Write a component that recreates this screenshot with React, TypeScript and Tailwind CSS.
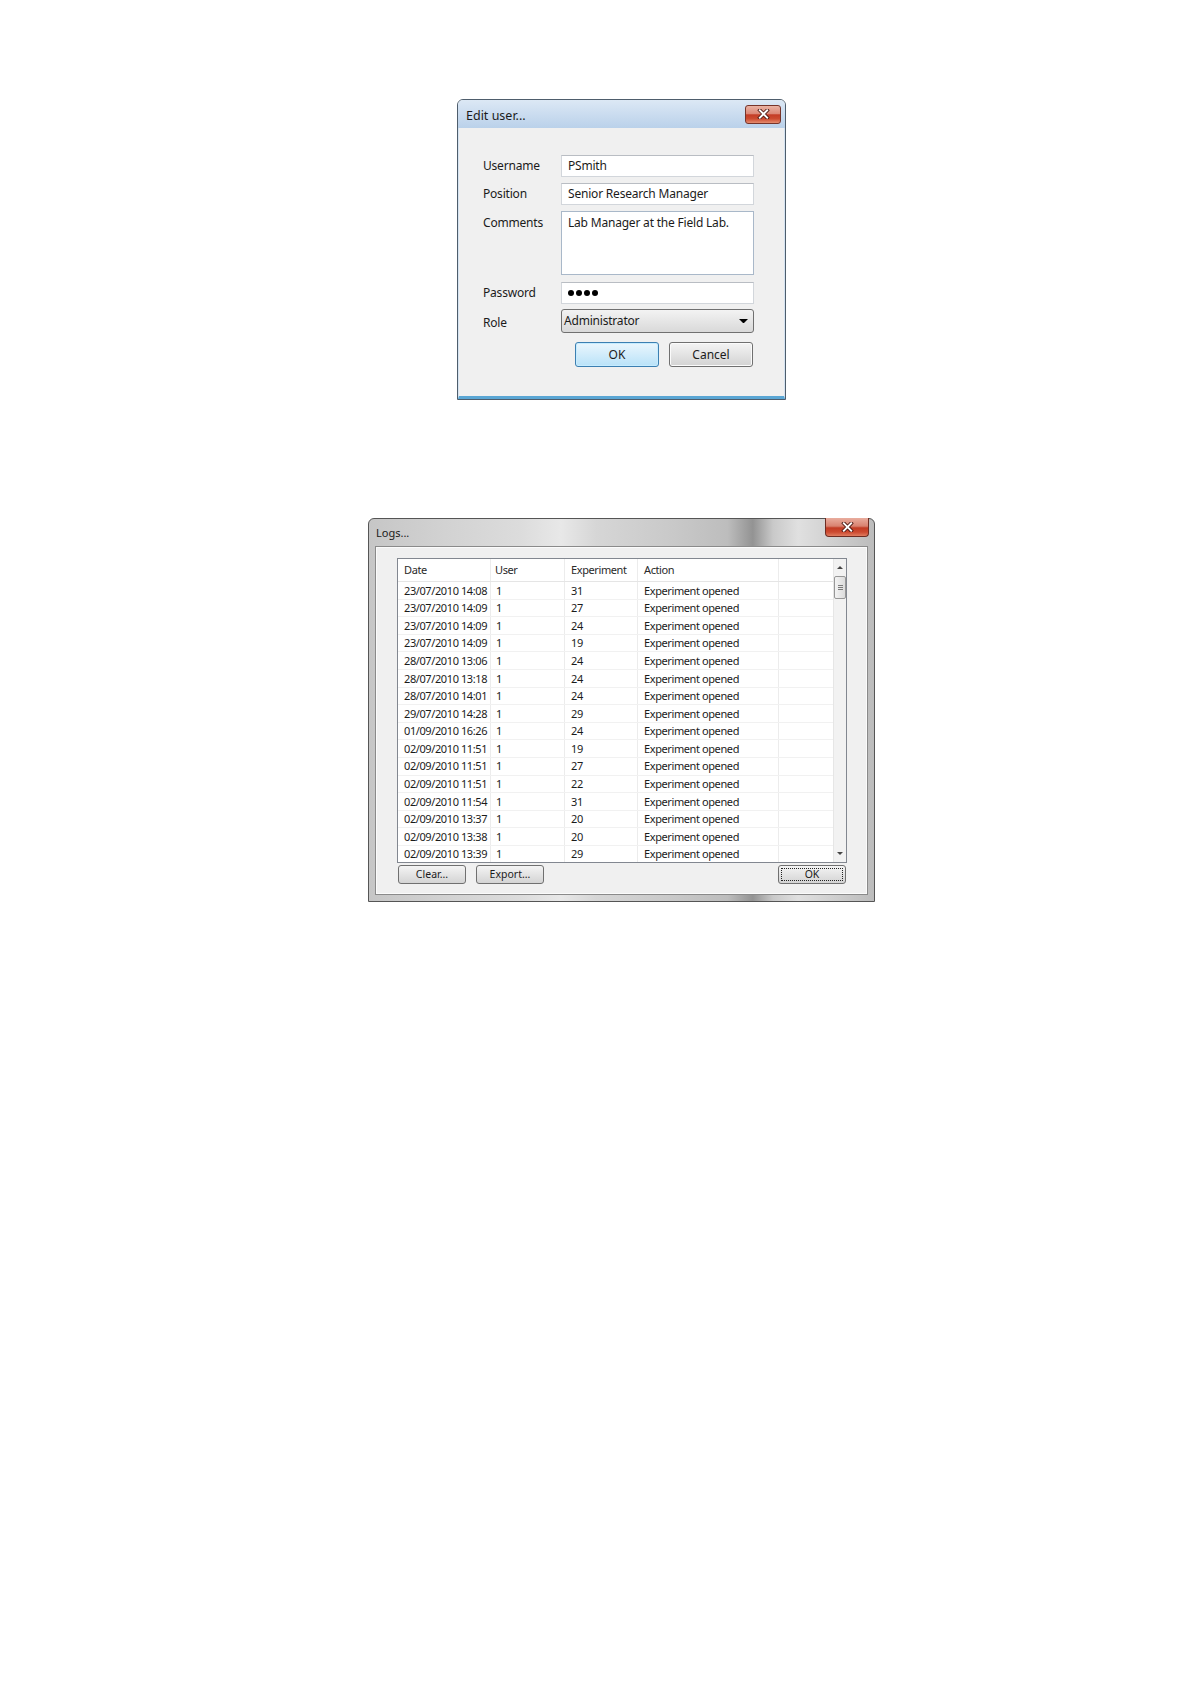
import React from "react";

function CloseGlyph({ w, h }: { w: number; h: number }) {
  return (
    <svg width={w} height={h} viewBox="0 0 14 11">
      <path d="M3 1.5 L11 9.5 M11 1.5 L3 9.5" stroke="#4a1610" strokeWidth="4" strokeLinecap="square" fill="none" />
      <path d="M3 1.5 L11 9.5 M11 1.5 L3 9.5" stroke="#ffffff" strokeWidth="2.2" strokeLinecap="square" fill="none" />
    </svg>
  );
}

function TriDown({ size = 8, color = "#000" }: { size?: number; color?: string }) {
  return (
    <svg width={size} height={size / 2} viewBox="0 0 8 4">
      <path d="M0 0 L8 0 L4 4 Z" fill={color} />
    </svg>
  );
}

const rows: [string, string, string][] = [
  ["23/07/2010 14:08", "1", "31"],
  ["23/07/2010 14:09", "1", "27"],
  ["23/07/2010 14:09", "1", "24"],
  ["23/07/2010 14:09", "1", "19"],
  ["28/07/2010 13:06", "1", "24"],
  ["28/07/2010 13:18", "1", "24"],
  ["28/07/2010 14:01", "1", "24"],
  ["29/07/2010 14:28", "1", "29"],
  ["01/09/2010 16:26", "1", "24"],
  ["02/09/2010 11:51", "1", "19"],
  ["02/09/2010 11:51", "1", "27"],
  ["02/09/2010 11:51", "1", "22"],
  ["02/09/2010 11:54", "1", "31"],
  ["02/09/2010 13:37", "1", "20"],
  ["02/09/2010 13:38", "1", "20"],
  ["02/09/2010 13:39", "1", "29"],
];

function EditUserDialog() {
  const input =
    "h-[22px] w-[193px] border border-[#d2d6db] border-t-[#b9bdc3] bg-white pl-[6px] flex items-center text-[12px] tracking-[-0.2px] text-[#1b1b1b]";
  const label = "w-[78px] text-[12px] tracking-[-0.2px] text-[#1b1b1b]";
  return (
    <div className="ml-[457px] w-[329px] h-[301px] flex flex-col rounded-t-[6px] border border-[#4e5d6c] overflow-hidden bg-[#f0f0f0]">
      <div className="h-[28px] shrink-0 flex items-center justify-between pl-[8px] pr-[4px] bg-gradient-to-b from-[#dce8f5] to-[#bad1ea]">
        <span className="text-[12.5px] text-[#1b1b1b] pt-[4px]">Edit user...</span>
        <div className="w-[36px] h-[19px] rounded-[3px] border border-[#76342a] flex items-center justify-center bg-[linear-gradient(180deg,#eab3a4_0%,#dc8877_45%,#c43d26_52%,#cc4b30_75%,#e58c6f_100%)]">
          <CloseGlyph w={13} h={10} />
        </div>
      </div>
      <div className="flex-1 flex flex-col pl-[24px] pt-[27px] border-x border-b-[3px] border-x-[#d6e4f2] border-b-[#5aa6d4]">
        <div className="flex items-center">
          <span className={label}>Username</span>
          <div className={input}>PSmith</div>
        </div>
        <div className="flex items-center mt-[6px]">
          <span className={label}>Position</span>
          <div className={input}>Senior Research Manager</div>
        </div>
        <div className="flex items-start mt-[6px]">
          <span className={label + " pt-[4px] leading-[16px]"}>Comments</span>
          <div className="h-[64px] w-[193px] border border-[#a9b8c9] bg-white pl-[6px] pt-[3px] text-[12px] tracking-[-0.2px] leading-[16px] text-[#1b1b1b]">
            Lab Manager at the Field Lab.
          </div>
        </div>
        <div className="flex items-center mt-[7px]">
          <span className={label}>Password</span>
          <div className={input + " gap-[2px]"}>
            <span className="w-[6px] h-[6px] rounded-full bg-black" />
            <span className="w-[6px] h-[6px] rounded-full bg-black" />
            <span className="w-[6px] h-[6px] rounded-full bg-black" />
            <span className="w-[6px] h-[6px] rounded-full bg-black" />
          </div>
        </div>
        <div className="flex items-center mt-[5px]">
          <span className={label + " pt-[3px]"}>Role</span>
          <div className="h-[24px] w-[193px] rounded-[3px] border border-[#707070] bg-gradient-to-b from-[#f3f3f3] to-[#d9d9d9] pl-[2px] pr-[5px] flex items-center justify-between text-[12px] tracking-[-0.2px] text-[#1b1b1b]">
            <span>Administrator</span>
            <TriDown size={9} />
          </div>
        </div>
        <div className="flex items-center mt-[9px] pl-[92px] gap-[10px]">
          <div className="w-[84px] h-[25px] rounded-[3px] border border-[#3c7fb1] bg-gradient-to-b from-[#eaf6fd] to-[#b9e2f8] shadow-[inset_0_0_0_1px_#c6ecff] flex items-center justify-center text-[12px] text-[#1b1b1b]">
            OK
          </div>
          <div className="w-[84px] h-[25px] rounded-[3px] border border-[#707070] bg-gradient-to-b from-[#f4f4f4] to-[#d3d3d3] shadow-[inset_0_0_0_1px_#fbfbfb] flex items-center justify-center text-[12px] text-[#1b1b1b]">
            Cancel
          </div>
        </div>
      </div>
    </div>
  );
}

function SmallButton({ children, focus }: { children: React.ReactNode; focus?: boolean }) {
  return (
    <div className="w-[68px] h-[19px] rounded-[3px] border border-[#707070] bg-gradient-to-b from-[#f4f4f4] to-[#d4d4d4] p-[2px]">
      <div
        className={
          "w-full h-full flex items-center justify-center text-[10.5px] text-[#1b1b1b] " +
          (focus ? "border border-dotted border-[#222]" : "")
        }
      >
        {children}
      </div>
    </div>
  );
}

function LogsDialog() {
  const cell = "h-full border-r border-[#ececec] flex items-center truncate";
  return (
    <div className="mt-[118px] ml-[368px] w-[507px] h-[384px] flex flex-col rounded-t-[6px] border border-[#555] pl-[6px] pr-[6px] pb-[6px] bg-[linear-gradient(90deg,#c6c6c6_0%,#d2d2d2_15%,#dcdcdc_30%,#e8e8e8_38%,#d6d6d6_45%,#c9c9c9_60%,#bdbdbd_71%,#939393_76%,#c9c9c9_80%,#e0e0e0_85%,#bcbcbc_100%)]">
      <div className="h-[27px] shrink-0 flex items-start justify-between">
        <span className="text-[11px] text-[#1b1b1b] pl-[1px] pt-[6px]">Logs...</span>
        <div className="w-[44px] h-[19px] mt-[-1px] mr-[-1px] rounded-b-[4px] border border-t-0 border-[#6e2c22] flex items-center justify-center bg-[linear-gradient(180deg,#e9ad9e_0%,#d98270_45%,#c23b24_55%,#cc4a30_78%,#e07c60_100%)]">
          <CloseGlyph w={13} h={10} />
        </div>
      </div>
      <div className="flex-1 border border-[#8a8a8a] bg-[#f0f0f0] shadow-[inset_0_0_0_1px_#fbfbfb] pl-[21px] pt-[11px]">
        <div className="w-[450px] h-[305px] border border-[#828790] bg-white flex">
          <div className="w-[435px] flex flex-col overflow-hidden text-[11px] tracking-[-0.4px]">
            <div className="h-[23px] shrink-0 flex border-b border-[#e5e5e5] text-[#2a2a2a]">
              <div className={cell + " w-[93px] pl-[6px] pt-[1px] border-[#e5e5e5]"}>Date</div>
              <div className={cell + " w-[74px] pl-[4px] pt-[1px] border-[#e5e5e5]"}>User</div>
              <div className={cell + " w-[73px] pl-[6px] pt-[1px] border-[#e5e5e5]"}>Experiment</div>
              <div className={cell + " w-[141px] pl-[6px] pt-[1px] border-[#e5e5e5]"}>Action</div>
              <div className="flex-1" />
            </div>
            {rows.map((r, i) => (
              <div key={i} className="h-[17.6px] shrink-0 flex border-b border-[#f1f1f1] text-[#1b1b1b]">
                <div className={cell + " w-[93px] pl-[6px] pt-[1px]"}>{r[0]}</div>
                <div className={cell + " w-[74px] pl-[5px] pt-[1px]"}>{r[1]}</div>
                <div className={cell + " w-[73px] pl-[6px] pt-[1px]"}>{r[2]}</div>
                <div className={cell + " w-[141px] pl-[6px] pt-[1px]"}>Experiment opened</div>
                <div className="flex-1" />
              </div>
            ))}
          </div>
          <div className="w-[13px] flex flex-col bg-[#f2f2f2] border-l border-[#e6e6e6]">
            <div className="h-[17px] flex items-center justify-center">
              <div className="rotate-180 flex">
                <TriDown size={6} color="#454545" />
              </div>
            </div>
            <div className="h-[23px] rounded-[2px] border border-[#979797] bg-gradient-to-r from-[#f3f3f3] to-[#dcdcdc] flex flex-col items-center justify-center gap-[1px]">
              <span className="w-[5px] h-[1px] bg-[#7a7a7a]" />
              <span className="w-[5px] h-[1px] bg-[#7a7a7a]" />
              <span className="w-[5px] h-[1px] bg-[#7a7a7a]" />
            </div>
            <div className="flex-1" />
            <div className="h-[17px] flex items-center justify-center">
              <TriDown size={6} color="#454545" />
            </div>
          </div>
        </div>
        <div className="w-[450px] mt-[2px] px-[1px] flex justify-between">
          <div className="flex gap-[10px]">
            <SmallButton>Clear...</SmallButton>
            <SmallButton>Export...</SmallButton>
          </div>
          <SmallButton focus>OK</SmallButton>
        </div>
      </div>
    </div>
  );
}

export default function App() {
  return (
    <div className="w-[1191px] h-[1684px] bg-white pt-[99px] font-['Noto_Sans',sans-serif] overflow-hidden">
      <EditUserDialog />
      <LogsDialog />
    </div>
  );
}
